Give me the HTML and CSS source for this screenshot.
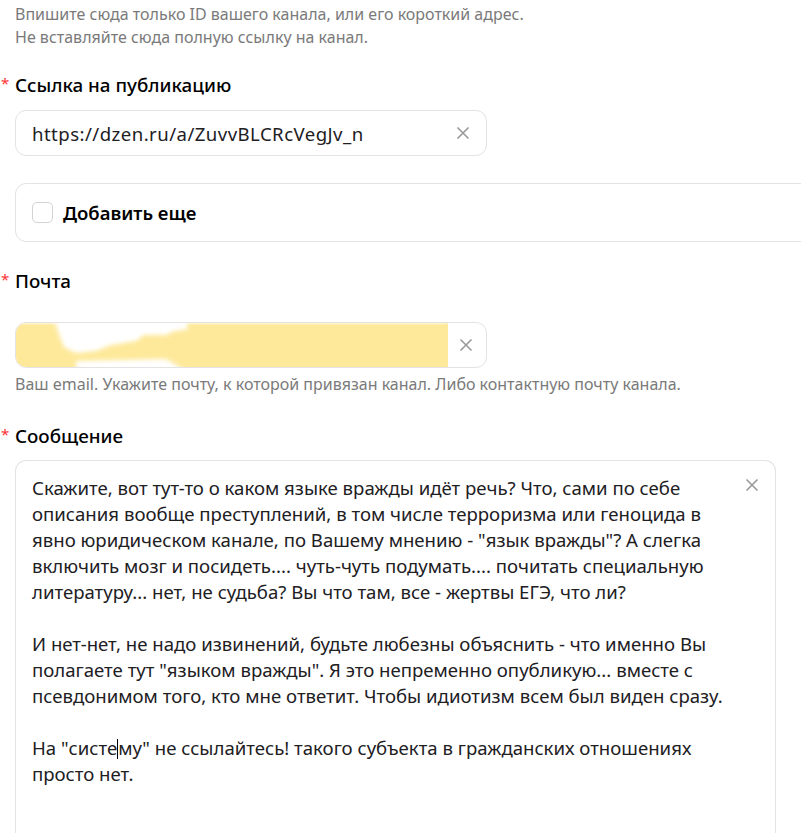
FILE: index.html
```html
<!DOCTYPE html>
<html lang="ru">
<head>
<meta charset="utf-8">
<title>Форма</title>
<link rel="stylesheet" href="styles.css">
</head>
<body>
<div class="page">
  <div class="hint top-hint">Впишите сюда только ID вашего канала, или его короткий адрес.<br>Не вставляйте сюда полную ссылку на канал.</div>

  <div class="label label-1"><span class="star">*</span>Ссылка на публикацию</div>
  <div class="input">
    <span class="value">https://dzen.ru/a/ZuvvBLCRcVegJv_n</span>
    <svg class="clear" width="14" height="14" viewBox="0 0 14 14"><path d="M1.5 1.5L12.5 12.5M12.5 1.5L1.5 12.5" stroke="#999" stroke-width="1.6" fill="none"/></svg>
  </div>

  <div class="card">
    <span class="checkbox"></span>
    <span class="card-text">Добавить еще</span>
  </div>

  <div class="label label-2"><span class="star">*</span>Почта</div>
  <div class="input email">
    <div class="mask">
      <svg width="432" height="45" viewBox="0 0 432 45">
        <defs><filter id="b" x="-20%" y="-50%" width="140%" height="200%"><feGaussianBlur stdDeviation="2.2"/></filter></defs>
        <rect x="0" y="0" width="432" height="45" fill="#fee99b"/>
        <path d="M38 -4 L160 -4 L162 6 L150 12 L128 12 L120 18 L95 22 L80 28 L60 30 L48 24 L44 14 Z M105 -4 L170 -4 L172 6 L160 8 Z M60 38 L150 36 L170 48 L60 48 Z" fill="#fff" filter="url(#b)"/>
        <path d="M0 -4 L432 -4 L432 0 L0 0 Z" fill="#fff" filter="url(#b)"/>
      </svg>
    </div>
    <svg class="clear" width="14" height="14" viewBox="0 0 14 14"><path d="M1.5 1.5L12.5 12.5M12.5 1.5L1.5 12.5" stroke="#999" stroke-width="1.6" fill="none"/></svg>
  </div>
  <div class="hint email-hint">Ваш email. Укажите почту, к которой привязан канал. Либо контактную почту канала.</div>

  <div class="label label-3"><span class="star">*</span>Сообщение</div>
  <div class="textarea">
    <div class="text">
      <div>Скажите, вот тут-то о каком языке вражды идёт речь? Что, сами по себе</div>
      <div>описания вообще преступлений, в том числе терроризма или геноцида в</div>
      <div>явно юридическом канале, по Вашему мнению - "язык вражды"? А слегка</div>
      <div>включить мозг и посидеть.... чуть-чуть подумать.... почитать специальную</div>
      <div>литературу... нет, не судьба? Вы что там, все - жертвы ЕГЭ, что ли?</div>
      <div>&nbsp;</div>
      <div>И нет-нет, не надо извинений, будьте любезны объяснить - что именно Вы</div>
      <div>полагаете тут "языком вражды". Я это непременно опубликую... вместе с</div>
      <div>псевдонимом того, кто мне ответит. Чтобы идиотизм всем был виден сразу.</div>
      <div>&nbsp;</div>
      <div>На "систе<span class="caret"></span>му" не ссылайтесь! такого субъекта в гражданских отношениях</div>
      <div>просто нет.</div>
    </div>
    <svg class="clear" width="14" height="14" viewBox="0 0 14 14"><path d="M1.5 1.5L12.5 12.5M12.5 1.5L1.5 12.5" stroke="#999" stroke-width="1.6" fill="none"/></svg>
  </div>
  <div class="bottom-line"></div>
</div>
</body>
</html>
```

FILE: styles.css
```css
html, body {
  margin: 0;
  padding: 0;
  background: #fff;
}
body {
  font-family: "Noto Sans", "Open Sans", "Liberation Sans", sans-serif;
  color: #000;
  overflow: hidden;
  height: 833px;
}
.page {
  padding: 3px 0 0 15px;
  display: flex;
  flex-direction: column;
}
.hint {
  font-size: 16px;
  line-height: 23px;
  color: #7a7a7a;
}
.label {
  display: flex;
  align-items: flex-start;
  margin-left: -15px;
  font-size: 18.8px;
  line-height: 24px;
  font-weight: 500;
  color: #000;
}
.star {
  width: 15px;
  padding-left: 1px;
  box-sizing: border-box;
  color: #f33;
  font-size: 15px;
  line-height: 20px;
  font-weight: 400;
}
.label-1 { margin-top: 24px; }
.label-2 { margin-top: 27px; }
.label-3 { margin-top: 28px; }

.input {
  margin-top: 13px;
  width: 472px;
  height: 46px;
  box-sizing: border-box;
  border: 1px solid #e3e3e3;
  border-radius: 11px;
  display: flex;
  align-items: center;
  padding-left: 16px;
  padding-right: 16px;
  overflow: hidden;
}
.value {
  flex: 1;
  font-size: 18.6px;
  letter-spacing: 0.45px;
  color: #21201f;
}
.clear {
  flex: none;
  width: 14px;
  height: 14px;
}
.card {
  margin-top: 27px;
  width: 800px;
  height: 59px;
  box-sizing: border-box;
  border: 1px solid #e3e3e3;
  border-radius: 11px;
  display: flex;
  align-items: center;
  padding-left: 16px;
  gap: 10px;
}
.checkbox {
  width: 21px;
  height: 21px;
  box-sizing: border-box;
  border: 1px solid #d3d3d3;
  border-radius: 5px;
}
.card-text {
  font-size: 18.5px;
  font-weight: 600;
  color: #000;
}
.email {
  margin-top: 29px;
  padding-left: 0;
}
.mask {
  width: 432px;
  height: 45px;
  flex: none;
  margin-right: 11px;
}
.mask svg { display: block; }
.email-hint { margin-top: 5px; }

.textarea {
  margin-top: 12px;
  width: 761px;
  height: 373px;
  box-sizing: border-box;
  border: 1px solid #e3e3e3;
  border-bottom: none;
  border-radius: 11px 11px 0 0;
  display: flex;
  align-items: flex-start;
  padding: 14px 16px 0 16px;
}
.text {
  flex: 1;
  font-size: 18.6px;
  line-height: 26px;
  color: #21201f;
  white-space: nowrap;
}
.textarea .clear {
  margin-top: 3px;
}
.caret {
  display: inline-block;
  width: 1px;
  height: 20px;
  background: #000;
  vertical-align: -4px;
}
.bottom-line {
  margin-left: -15px;
  width: 801px;
  height: 1px;
  background: #c8ecec;
}
```
